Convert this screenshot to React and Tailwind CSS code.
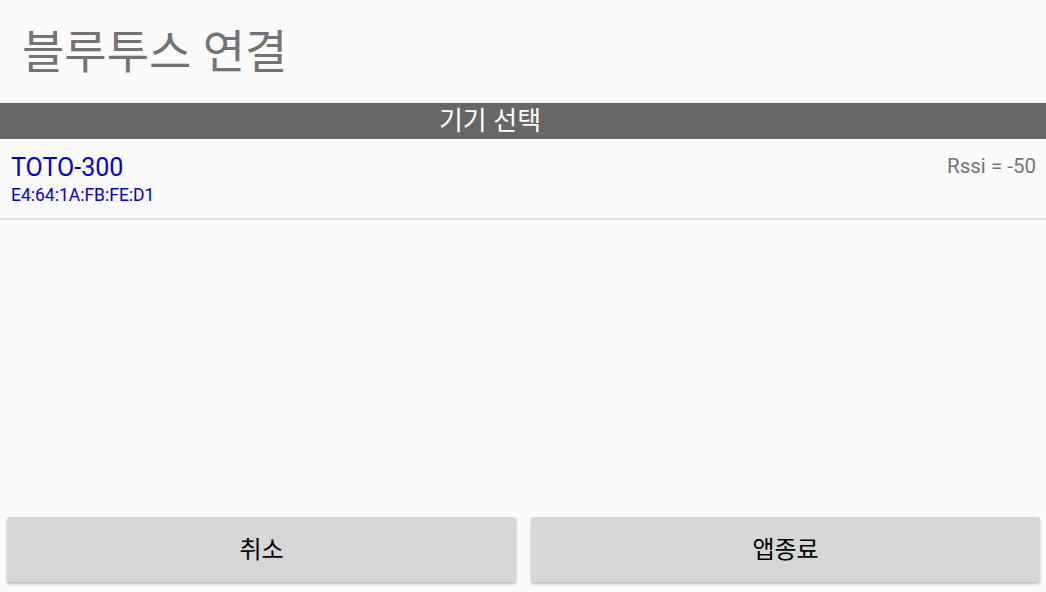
import React from "react";

const App = () => {
    return (
        <div className="flex flex-col h-[592px] w-full bg-[#fafafa] font-['Roboto','Noto_Sans_CJK_KR',sans-serif]">
            {/* Title */}
            <div className="h-[103px] flex items-center pl-[22px]">
                <h1 className="text-[46px] leading-none text-[#737373] font-normal">블루투스 연결</h1>
            </div>

            {/* Section bar */}
            <div className="h-[36px] bg-[#666666] flex items-center justify-center pr-[66px]">
                <span className="text-[26px] leading-none text-white">기기 선택</span>
            </div>

            {/* Device list */}
            <div className="h-[81px] border-b-2 border-[#e0e0e0] flex justify-between px-[10px]">
                <div className="flex flex-col pt-[14px] pl-[1px]">
                    <span className="text-[25px] leading-[30px] text-[#0000dd]">TOTO-300</span>
                    <span className="text-[17.5px] leading-[20px] text-[#0000dd] mt-[2px]">E4:64:1A:FB:FE:D1</span>
                </div>
                <span className="text-[20.5px] leading-none text-[#757575] pt-[17px]">Rssi = -50</span>
            </div>

            <div className="flex-1" />

            {/* Buttons */}
            <div className="flex gap-[15px] pl-[7px] pr-[6px] pb-[10px]">
                <button className="flex-1 h-[65px] bg-[#d6d7d7] rounded-[3px] shadow-[0_2px_3px_rgba(0,0,0,0.25)] text-[24px] text-black">
                    취소
                </button>
                <button className="flex-1 h-[65px] bg-[#d6d7d7] rounded-[3px] shadow-[0_2px_3px_rgba(0,0,0,0.25)] text-[24px] text-black">
                    앱종료
                </button>
            </div>
        </div>
    );
};

export default App;
